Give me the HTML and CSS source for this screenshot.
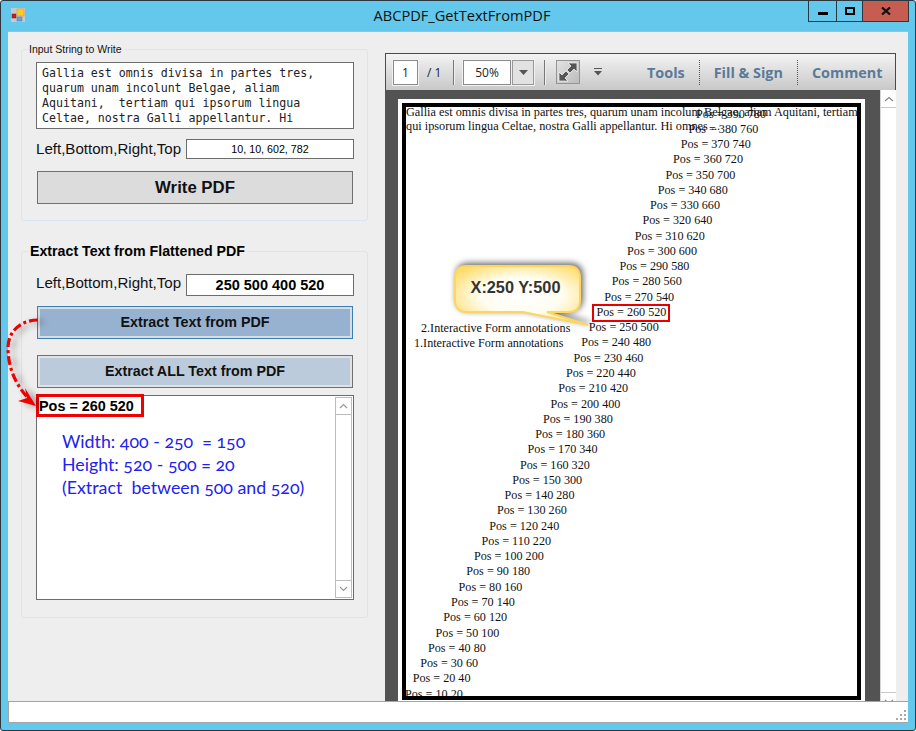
FILE: index.html
```html
<!DOCTYPE html>
<html lang="en">
<head>
  <meta charset="UTF-8">
  <title>ABCPDF_GetTextFromPDF</title>
  <link rel="stylesheet" href="styles.css">
</head>
<body>
<div class="window">

  <div class="titlebar">
    <svg class="app-icon" width="14" height="14" viewBox="0 0 14 14">
      <rect x="0" y="0" width="14" height="14" fill="#c9c9c9"/>
      <rect x="1" y="6" width="4" height="4" fill="#c8201c" stroke="#7a1a14" stroke-width="0.5"/>
      <rect x="6" y="1" width="7" height="7" fill="#ffc91f" stroke="#d89c10" stroke-width="0.5"/>
      <rect x="6" y="9" width="5" height="4" fill="#6f9fdc" stroke="#4a78b8" stroke-width="0.5"/>
    </svg>
    <div class="title">ABCPDF_GetTextFromPDF</div>
    <div class="win-buttons">
      <div class="win-btn min"><span class="min-bar"></span></div>
      <div class="win-btn max"><span class="max-box"></span></div>
      <div class="win-btn close">
        <svg width="10" height="8" viewBox="0 0 10 8"><path d="M1 0.5 L9 7.5 M9 0.5 L1 7.5" stroke="#111" stroke-width="2.2" fill="none"/></svg>
      </div>
    </div>
  </div>

  <div class="client">
    <div class="main">

      <div class="left">
        <fieldset class="group group-write">
          <legend class="legend-small">Input String to Write</legend>
          <div class="textarea">Gallia est omnis divisa in partes tres,
quarum unam incolunt Belgae, aliam
Aquitani,  tertiam qui ipsorum lingua
Celtae, nostra Galli appellantur. Hi</div>
          <div class="field-row">
            <span class="field-label">Left,Bottom,Right,Top</span>
            <div class="input input-small">10, 10, 602, 782</div>
          </div>
          <button class="btn btn-write">Write PDF</button>
        </fieldset>

        <fieldset class="group group-extract">
          <legend class="legend-bold">Extract Text from Flattened PDF</legend>
          <div class="field-row">
            <span class="field-label label-raised">Left,Bottom,Right,Top</span>
            <div class="input input-bold">250 500 400 520</div>
          </div>
          <button class="btn btn-extract">Extract Text from PDF</button>
          <button class="btn btn-extract-all">Extract ALL Text from PDF</button>
          <div class="result">
            <div class="result-text">
              <span class="hit">Pos = 260 520</span>
              <div class="note">Width: 400 - 250  = 150<br>Height: 520 - 500 = 20<br>(Extract  between 500 and 520)</div>
            </div>
            <div class="scrollbar">
              <div class="sb-btn"><svg width="9" height="6" viewBox="0 0 9 6"><path d="M1 5 L4.5 1.5 L8 5" stroke="#999" stroke-width="1.2" fill="none"/></svg></div>
              <div class="sb-track"></div>
              <div class="sb-btn"><svg width="9" height="6" viewBox="0 0 9 6"><path d="M1 1 L4.5 4.5 L8 1" stroke="#999" stroke-width="1.2" fill="none"/></svg></div>
            </div>
          </div>
        </fieldset>
      </div>

      <div class="right">
        <div class="toolbar">
          <div class="tb-input tb-page">1</div>
          <span class="tb-total">/ 1</span>
          <span class="tb-sep"></span>
          <div class="tb-input tb-zoom">50%</div>
          <div class="tb-drop"><svg width="9" height="5" viewBox="0 0 9 5"><path d="M0 0 H9 L4.5 5 Z" fill="#555"/></svg></div>
          <span class="tb-sep tb-sep2"></span>
          <div class="tb-expand">
            <svg width="22" height="22" viewBox="0 0 22 22">
              <path d="M20 2 V11 L17 8 L13 12 L10 9 L14 5 L11 2 Z" fill="#555" stroke="#fff" stroke-width="0.7"/>
              <path d="M2 20 V11 L5 14 L9 10 L12 13 L8 17 L11 20 Z" fill="#555" stroke="#fff" stroke-width="0.7"/>
            </svg>
          </div>
          <svg class="tb-more" width="10" height="8" viewBox="0 0 10 8"><path d="M1 0.5 H9" stroke="#555"/><path d="M1 3 H9 L5 7.5 Z" fill="#555"/></svg>
          <span class="tb-link tb-tools">Tools</span>
          <span class="tb-dots"></span>
          <span class="tb-link">Fill &amp; Sign</span>
          <span class="tb-dots"></span>
          <span class="tb-link">Comment</span>
        </div>

        <div class="viewer">
          <div class="page">
            <div class="frame">
              <div class="canvas">
                <div class="page-text">Gallia est omnis divisa in partes tres, quarum unam incolunt Belgae, aliam Aquitani, tertiam<br>qui ipsorum lingua Celtae, nostra Galli appellantur. Hi omnes ...</div>
                <div class="pos-list">
                  <div style="padding-left:291.1px">Pos = 390 780</div>
                  <div style="padding-left:283.4px">Pos = 380 760</div>
                  <div style="padding-left:275.8px">Pos = 370 740</div>
                  <div style="padding-left:268.1px">Pos = 360 720</div>
                  <div style="padding-left:260.4px">Pos = 350 700</div>
                  <div style="padding-left:252.8px">Pos = 340 680</div>
                  <div style="padding-left:245.1px">Pos = 330 660</div>
                  <div style="padding-left:237.5px">Pos = 320 640</div>
                  <div style="padding-left:229.8px">Pos = 310 620</div>
                  <div style="padding-left:222.1px">Pos = 300 600</div>
                  <div style="padding-left:214.5px">Pos = 290 580</div>
                  <div style="padding-left:206.8px">Pos = 280 560</div>
                  <div style="padding-left:199.2px">Pos = 270 540</div>
                  <div style="padding-left:191.5px">Pos = 260 520</div>
                  <div style="padding-left:183.8px">Pos = 250 500</div>
                  <div style="padding-left:176.2px">Pos = 240 480</div>
                  <div style="padding-left:168.5px">Pos = 230 460</div>
                  <div style="padding-left:160.9px">Pos = 220 440</div>
                  <div style="padding-left:153.2px">Pos = 210 420</div>
                  <div style="padding-left:145.5px">Pos = 200 400</div>
                  <div style="padding-left:137.9px">Pos = 190 380</div>
                  <div style="padding-left:130.2px">Pos = 180 360</div>
                  <div style="padding-left:122.6px">Pos = 170 340</div>
                  <div style="padding-left:114.9px">Pos = 160 320</div>
                  <div style="padding-left:107.2px">Pos = 150 300</div>
                  <div style="padding-left:99.6px">Pos = 140 280</div>
                  <div style="padding-left:91.9px">Pos = 130 260</div>
                  <div style="padding-left:84.3px">Pos = 120 240</div>
                  <div style="padding-left:76.6px">Pos = 110 220</div>
                  <div style="padding-left:68.9px">Pos = 100 200</div>
                  <div style="padding-left:61.3px">Pos = 90 180</div>
                  <div style="padding-left:53.6px">Pos = 80 160</div>
                  <div style="padding-left:46px">Pos = 70 140</div>
                  <div style="padding-left:38.3px">Pos = 60 120</div>
                  <div style="padding-left:30.6px">Pos = 50 100</div>
                  <div style="padding-left:23px">Pos = 40 80</div>
                  <div style="padding-left:15.3px">Pos = 30 60</div>
                  <div style="padding-left:7.7px">Pos = 20 40</div>
                  <div>Pos = 10 20</div>
                </div>
                <div class="annot annot-2">2.Interactive Form annotations</div>
                <div class="annot annot-1">1.Interactive Form annotations</div>
                <div class="pos-box"></div>
                <svg class="callout" width="155" height="80" viewBox="0 0 155 80">
                  <defs>
                    <radialGradient id="bubbleFill" cx="50%" cy="50%" r="62%">
                      <stop offset="0" stop-color="#ffffff"/>
                      <stop offset="0.5" stop-color="#fffdf0"/>
                      <stop offset="1" stop-color="#ffdc6a"/>
                    </radialGradient>
                  </defs>
                  <path class="callout-shape" fill="url(#bubbleFill)" d="M22 11 H123 Q135 11 135 23 V45 Q135 57 123 57 H102 L143 70 L78 57 H22 Q10 57 10 45 V23 Q10 11 22 11 Z"/>
                  <text class="callout-text" x="70.5" y="38" text-anchor="middle">X:250 Y:500</text>
                </svg>
              </div>
            </div>
          </div>
          <div class="viewer-scroll">
            <div class="vs-btn"><svg width="10" height="6" viewBox="0 0 10 6"><path d="M1 5 L5 1.5 L9 5" stroke="#888" stroke-width="1.2" fill="none"/></svg></div>
            <div class="vs-track"></div>
            <div class="vs-btn"><svg width="10" height="6" viewBox="0 0 10 6"><path d="M1 1 L5 4.5 L9 1" stroke="#888" stroke-width="1.2" fill="none"/></svg></div>
          </div>
        </div>
      </div>
    </div>

    <div class="statusbar">
      <svg class="grip" width="11" height="11" viewBox="0 0 11 11" fill="#a8a8a8">
        <rect x="8" y="0" width="2" height="2"/><rect x="4" y="4" width="2" height="2"/><rect x="8" y="4" width="2" height="2"/>
        <rect x="0" y="8" width="2" height="2"/><rect x="4" y="8" width="2" height="2"/><rect x="8" y="8" width="2" height="2"/>
      </svg>
    </div>
  </div>

  <svg class="arrow" width="50" height="110" viewBox="0 0 50 110">
    <path d="M38 10 C20 10 8 22 8 38 C8 58 16 75 28 88" fill="none" stroke="#f00000" stroke-width="3.2" stroke-dasharray="9 3 3 3"/>
    <path d="M36 96 L18 91 L27 88 L25 78 Z" fill="#f00000"/>
  </svg>
</div>
</body>
</html>
```

FILE: styles.css
```css
* {
  box-sizing: border-box;
}

body {
  margin: 0;
  font-family: "Liberation Sans", Arial, sans-serif;
  color: #000;
}

.window {
  position: relative;
  width: 916px;
  height: 731px;
  display: flex;
  flex-direction: column;
  background: #63c8eb;
  border: 1px solid #2c3840;
  border-radius: 3px;
  overflow: hidden;
}

/* title bar */
.titlebar {
  position: relative;
  height: 30px;
  flex: none;
  display: flex;
  justify-content: center;
}

.app-icon {
  position: absolute;
  left: 10px;
  top: 7px;
}

.title {
  margin: 5px 0 0 8px;
  font-family: "Open Sans", sans-serif;
  font-size: 14.6px;
  line-height: 19px;
  color: #111;
}

.win-buttons {
  position: absolute;
  top: 0;
  right: 6px;
  display: flex;
  height: 21px;
  border: 1px solid #2c3840;
  border-top: none;
}

.win-btn {
  height: 20px;
  display: flex;
  align-items: center;
  justify-content: center;
}

.win-btn.min {
  width: 28px;
  border-right: 1px solid #2c3840;
}

.win-btn.max {
  width: 26px;
  border-right: 1px solid #2c3840;
}

.win-btn.close {
  width: 45px;
  background: #c75c50;
}

.min-bar {
  width: 10px;
  height: 3px;
  margin-top: 4px;
  background: #000;
}

.max-box {
  width: 10px;
  height: 8px;
  border: 2px solid #000;
}

/* client area */
.client {
  flex: 1;
  display: flex;
  flex-direction: column;
  margin: 0 7px 7px;
  background: #eeeeee;
  border-top: 1px solid #8fc4da;
  min-height: 0;
}

.main {
  flex: 1;
  display: flex;
  min-height: 0;
}

.left {
  width: 347px;
  margin-left: 13px;
  flex: none;
}

.group {
  margin: 0;
  min-width: 0;
  border: 1px solid #d9e5f0;
  border-radius: 3px;
  padding: 0 13px 0 14px;
}

.group-write {
  margin-top: 10px;
  height: 179px;
}

.group-extract {
  margin-top: 22px;
  height: 375px;
}

.legend-small {
  padding: 1px 2px 0 1px;
  margin-left: -8px;
  font-size: 10.5px;
  line-height: 13px;
  color: #111;
}

.legend-bold {
  padding: 0 2px 0 1px;
  margin-left: -7px;
  font-size: 14.2px;
  line-height: 16px;
  font-weight: bold;
}

.textarea {
  height: 67px;
  margin-top: 6px;
  padding: 3px 5px;
  background: #fff;
  border: 1px solid #6d6d6d;
  font-family: "DejaVu Sans Mono", monospace;
  font-size: 11.6px;
  line-height: 15px;
  white-space: pre;
  overflow: hidden;
  color: #222;
}

.field-row {
  display: flex;
  align-items: center;
  justify-content: space-between;
}

.group-write .field-row {
  margin-top: 10px;
}

.group-extract .field-row {
  margin-top: 15px;
}

.field-label {
  margin-top: -2px;
  font-size: 15.1px;
  color: #111;
}

.label-raised {
  margin-top: -6px;
}

.input {
  width: 168px;
  background: #fff;
  border: 1px solid #6d6d6d;
  text-align: center;
}

.input-small {
  height: 20px;
  font-size: 10.7px;
  line-height: 18px;
}

.input-bold {
  height: 22px;
  font-size: 14.5px;
  line-height: 20px;
  font-weight: bold;
}

.btn {
  display: block;
  width: 316px;
  height: 33px;
  margin: 0 0 0 1px;
  padding: 0;
  border: 1px solid #707070;
  font-family: "Liberation Sans", Arial, sans-serif;
  font-weight: bold;
  color: #111;
}

.btn-write {
  margin-top: 12px;
  background: #dcdcdc;
  font-size: 16.8px;
}

.btn-extract {
  margin-top: 10px;
  padding-bottom: 2px;
  background: #97b2d0;
  border-color: #3a7fb3;
  box-shadow: inset 0 0 0 2px #d8dde2;
  font-size: 14.3px;
}

.btn-extract-all {
  margin-top: 16px;
  padding-bottom: 2px;
  background: #bccbdc;
  box-shadow: inset 0 0 0 2px #e2e2e2;
  font-size: 14.3px;
}

.result {
  display: flex;
  height: 205px;
  margin-top: 7px;
  background: #fff;
  border: 1px solid #6d6d6d;
}

.result-text {
  flex: 1;
  min-width: 0;
}

.hit {
  display: inline-block;
  height: 23px;
  width: 108px;
  margin: -2px 0 0 -1px;
  border: 3px solid #f00000;
  font-size: 14.4px;
  line-height: 19px;
  font-weight: bold;
  white-space: nowrap;
}

.note {
  margin: 13px 0 0 25px;
  font-family: Lato, sans-serif;
  font-size: 17.8px;
  line-height: 23px;
  color: #2222ee;
  font-variant-numeric: oldstyle-nums;
  white-space: pre;
}

.scrollbar {
  width: 17px;
  margin: 1px 1px 1px 0;
  display: flex;
  flex-direction: column;
  border: 1px solid #bcbcbc;
  background: #fff;
}

.sb-btn {
  height: 16px;
  flex: none;
  display: flex;
  align-items: center;
  justify-content: center;
}

.sb-track {
  flex: 1;
  border-top: 1px solid #bcbcbc;
  border-bottom: 1px solid #bcbcbc;
}

/* pdf side */
.right {
  width: 511px;
  margin: 21px 0 0 17px;
  flex: none;
  display: flex;
  flex-direction: column;
  min-height: 0;
}

.toolbar {
  height: 38px;
  flex: none;
  display: flex;
  align-items: center;
  padding-left: 7px;
  background: linear-gradient(#f3f3f3, #c8c8c8);
  border: 1px solid #4a4a4a;
  font-size: 12px;
  font-family: "Open Sans", sans-serif;
  color: #222;
}

.tb-input {
  height: 25px;
  background: #fff;
  border: 1px solid #8a8a8a;
  box-shadow: 0 0 0 1px #f2f2f2;
  text-align: center;
  line-height: 23px;
}

.tb-page {
  width: 25px;
}

.tb-total {
  margin-left: 9px;
  width: 26px;
  font-size: 12px;
}

.tb-sep {
  width: 1px;
  height: 25px;
  background: #777;
  box-shadow: 1px 0 0 #eee;
}

.tb-zoom {
  width: 48px;
  margin-left: 9px;
}

.tb-drop {
  width: 22px;
  height: 25px;
  margin-left: 1px;
  display: flex;
  align-items: center;
  justify-content: center;
  background: #e2e2e2;
  border: 1px solid #999;
  box-shadow: 0 0 0 1px #f2f2f2;
}

.tb-sep2 {
  margin-left: 10px;
}

.tb-expand {
  width: 24px;
  height: 24px;
  margin-left: 11px;
  background: linear-gradient(135deg, #e2e2e2, #bcbcbc);
  border: 1px solid #949494;
}

.tb-expand svg {
  display: block;
}

.tb-more {
  margin-left: 13px;
}

.tb-link {
  font-size: 14.4px;
  font-weight: bold;
  color: #5b7a98;
  white-space: nowrap;
}

.tb-tools {
  margin-left: 44px;
}

.tb-dots {
  width: 1px;
  height: 25px;
  margin: 0 14px;
  border-left: 1px dotted #555;
}

.viewer {
  position: relative;
  flex: 1;
  min-height: 0;
  display: flex;
  background: #535353;
  overflow: hidden;
  margin-top: -1px;
  height: 611px;
}

.page {
  width: 467px;
  height: 640px;
  margin: 9px 0 0 13px;
  padding: 4px;
  flex: none;
  background: #fff;
}

.frame {
  width: 459px;
  height: 597px;
  border: 4px solid #000;
  background: #fff;
}

.canvas {
  position: relative;
  height: 100%;
  overflow: hidden;
  font-family: "Liberation Serif", "Times New Roman", serif;
  font-size: 12.15px;
  color: #111;
}

.page-text {
  position: absolute;
  left: 0;
  top: -2px;
  font-size: 12.28px;
  line-height: 14px;
  white-space: nowrap;
}

.pos-list {
  position: absolute;
  left: -1px;
  top: -0.5px;
  line-height: 15.26px;
  white-space: nowrap;
}

.annot {
  position: absolute;
  white-space: nowrap;
  line-height: 14px;
}

.annot-2 {
  left: 15px;
  top: 214px;
}

.annot-1 {
  left: 8px;
  top: 229px;
}

.pos-box {
  position: absolute;
  left: 186px;
  top: 197px;
  width: 78px;
  height: 18px;
  border: 2px solid #e80000;
}

.callout {
  position: absolute;
  left: 39px;
  top: 148px;
}

.callout-shape {
  stroke: #fdd662;
  stroke-width: 2;
  filter: drop-shadow(2px -2px 3px rgba(0, 0, 0, 0.6));
}

.callout-text {
  font-family: "Liberation Sans", Arial, sans-serif;
  font-size: 16.3px;
  font-weight: bold;
  fill: #333;
}

.viewer-scroll {
  width: 16px;
  height: 620px;
  margin-left: 15px;
  flex: none;
  display: flex;
  flex-direction: column;
  background: #fff;
  border-left: 1px solid #d5d5d5;
}

.vs-btn {
  height: 17px;
  flex: none;
  display: flex;
  align-items: center;
  justify-content: center;
}

.vs-track {
  flex: 1;
  border-top: 1px solid #c8c8c8;
  border-bottom: 1px solid #c8c8c8;
}

/* status bar */
.statusbar {
  position: relative;
  height: 22px;
  flex: none;
  background: #fff;
  border-top: 1px solid #a4a4a4;
  border-bottom: 1px solid #a4a4a4;
  border-left: 1px solid #a4a4a4;
}

.grip {
  position: absolute;
  right: 1px;
  bottom: 1px;
}

/* red arrow drawn over the left panel */
.arrow {
  position: absolute;
  left: -1px;
  top: 309px;
  overflow: visible;
  filter: drop-shadow(5px 2px 3px rgba(0, 0, 0, 0.4));
}
```
